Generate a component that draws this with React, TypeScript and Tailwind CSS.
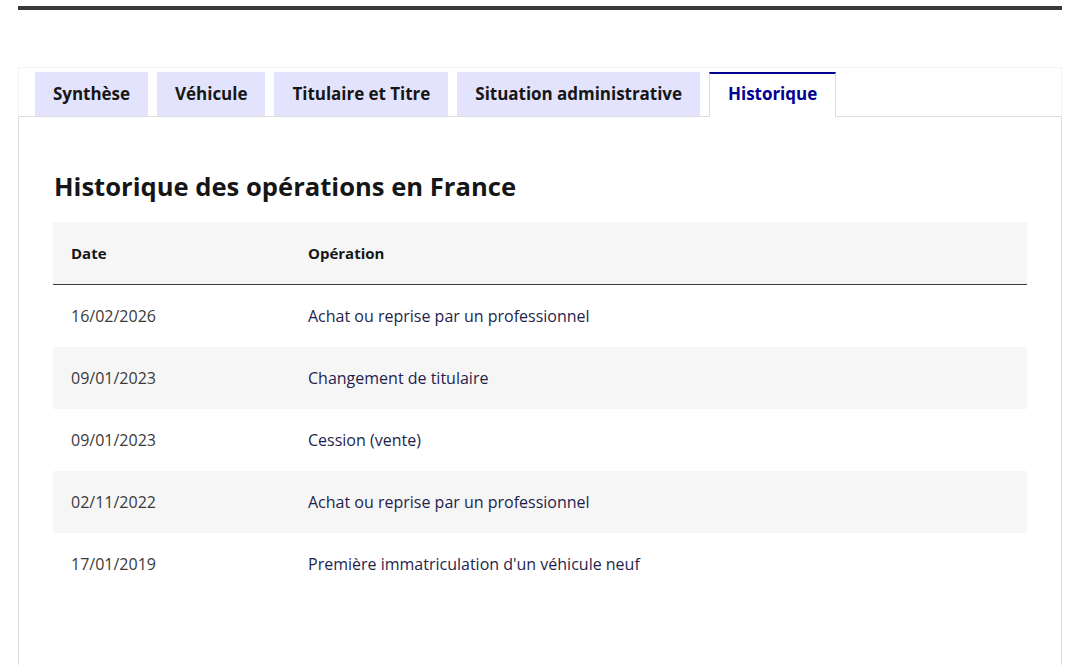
import React from "react";

const tabs = ["Synthèse", "Véhicule", "Titulaire et Titre", "Situation administrative"];
const rows = [
  ["16/02/2026", "Achat ou reprise par un professionnel"],
  ["09/01/2023", "Changement de titulaire"],
  ["09/01/2023", "Cession (vente)"],
  ["02/11/2022", "Achat ou reprise par un professionnel"],
  ["17/01/2019", "Première immatriculation d'un véhicule neuf"],
];

export default function App() {
  return (
    <div
      className="w-[1080px] h-[665px] overflow-hidden bg-white text-[#161616]"
      style={{ fontFamily: '"Open Sans", "Noto Sans", sans-serif' }}
    >
      <div className="mx-[18px] mt-[6px] h-[4px] bg-[#3a3a3a]" />
      <div className="mx-[18px] mt-[57px]">
        <div className="flex gap-[9px] pl-[16px] pt-[4px] border-t border-l border-r border-[#f3f3f3]">
          {tabs.map((t) => (
            <div
              key={t}
              className="h-[44px] px-[18px] flex items-center bg-[#e3e3fd] text-[17px] font-bold text-[#161616] tracking-[-0.03px]"
            >
              {t}
            </div>
          ))}
          <div className="h-[45px] -mb-px pb-[3px] px-[18px] flex items-center bg-white border-t-2 border-t-[#000091] border-l border-r border-[#dddddd] text-[17px] font-bold text-[#000091] tracking-[-0.03px] relative z-10">
            Historique
          </div>
        </div>
        <div className="border border-[#dddddd] h-[560px] px-[35px] pt-[52px]">
          <h3 className="text-[25.6px] leading-[36px] font-bold text-[#161616] mb-[17px]">
            Historique des opérations en France
          </h3>
          <div className="w-[974px] -ml-px">
            <div className="flex h-[63px] items-center bg-[#f6f6f6] border-b border-[#3a3a3a] text-[15px] font-bold text-[#161616]">
              <div className="w-[237px] pl-[18px]">Date</div>
              <div className="pl-[18px]">Opération</div>
            </div>
            {rows.map(([d, o], i) => (
              <div
                key={i}
                className={`flex h-[62px] items-center text-[16px] ${i % 2 === 1 ? "bg-[#f6f6f6]" : "bg-white"}`}
              >
                <div className="w-[237px] pl-[18px] text-[#3a3a3a]">{d}</div>
                <div className="pl-[18px] text-[#1f1f4d]">{o}</div>
              </div>
            ))}
          </div>
        </div>
      </div>
    </div>
  );
}
